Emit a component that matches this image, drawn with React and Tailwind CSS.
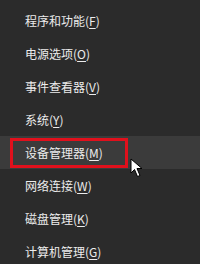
const items = [
  ['程序和功能', 'F'],
  ['电源选项', 'O'],
  ['事件查看器', 'V'],
  ['系统', 'Y'],
  ['设备管理器', 'M'],
  ['网络连接', 'W'],
  ['磁盘管理', 'K'],
  ['计算机管理', 'G'],
]

function Cursor() {
  return (
    <svg width="14" height="20" viewBox="0 0 14 20" className="absolute left-[130px] top-[158px]">
      <path d="M1 1 L1 15 L4.5 11.5 L7.5 18.5 L10 17.5 L7 10.5 L12 10.5 Z" fill="#fff" stroke="#000" strokeWidth="1" />
    </svg>
  )
}

export default function App() {
  return (
    <div
      className="relative h-[264px] w-[200px] overflow-hidden bg-[#2b2b2b] pt-[4px] text-[12px] text-[#ececec]"
      style={{ fontFamily: '"Microsoft YaHei", "Noto Sans CJK SC", sans-serif' }}
    >
      {items.map(([label, key], i) => (
        <div
          key={key}
          className={`flex h-[33px] items-center pl-[25px] ${i === 4 ? 'bg-[#3b3b3b]' : ''}`}
        >
          {label}(<span className="underline underline-offset-2">{key}</span>)
        </div>
      ))}
      <div className="absolute left-[10px] top-[138px] h-[30px] w-[118px] border-[3px] border-[#e0101c]" />
      <Cursor />
    </div>
  )
}
